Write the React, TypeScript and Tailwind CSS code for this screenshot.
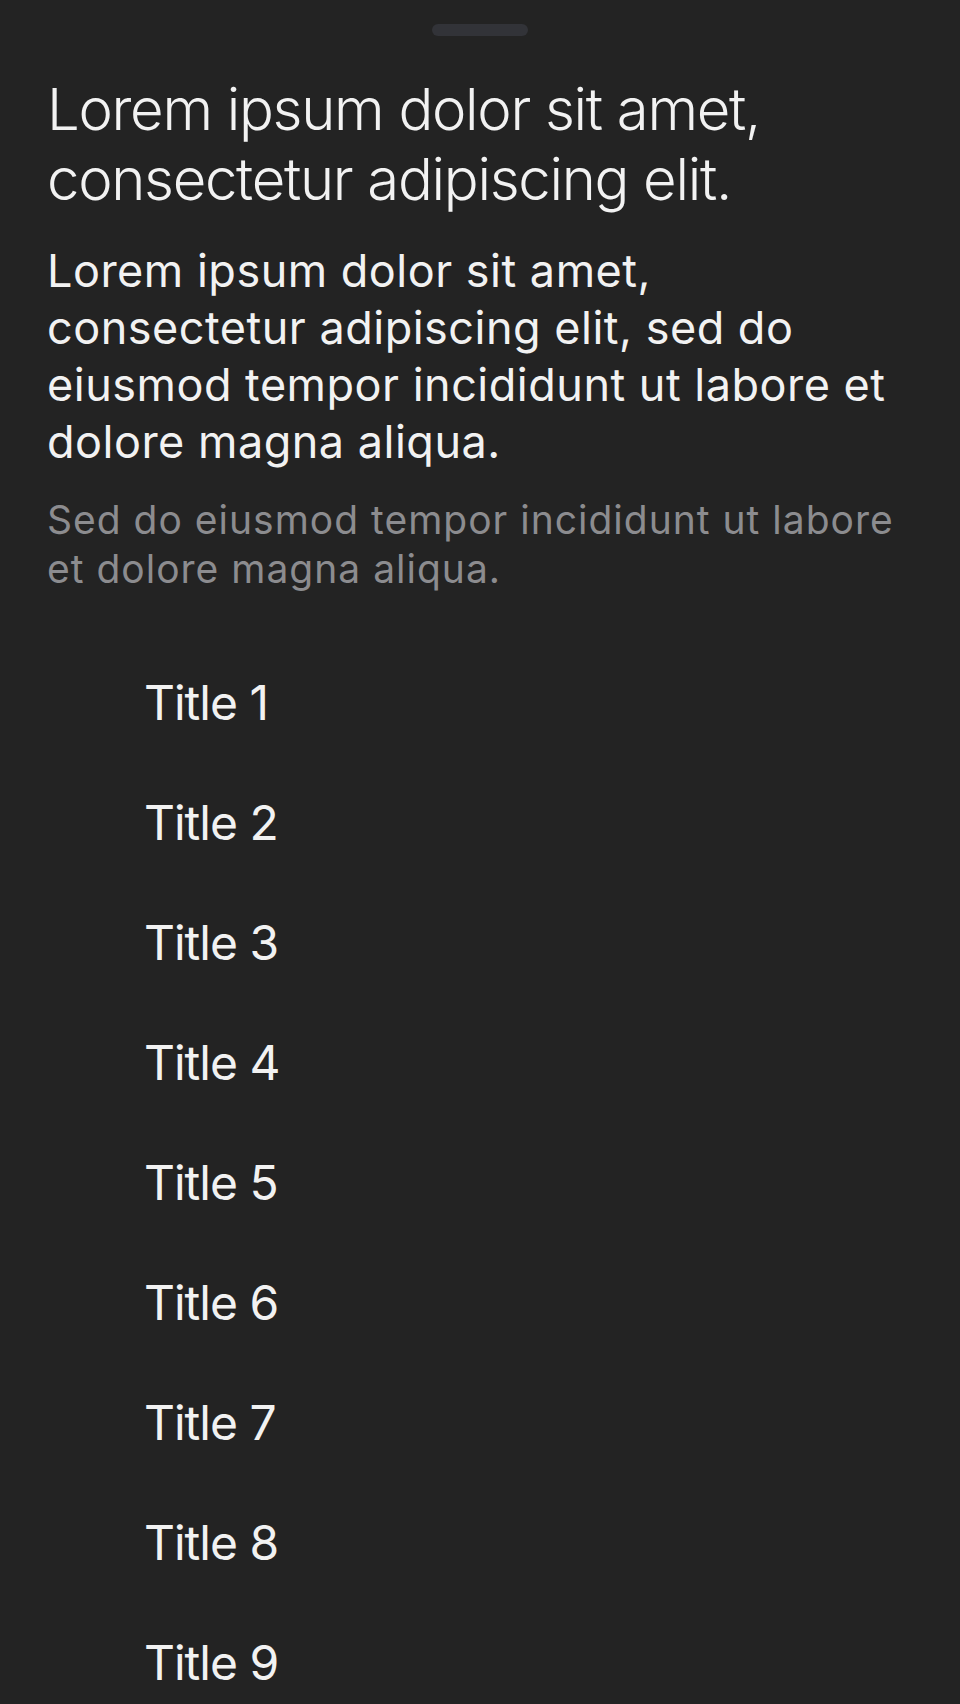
import React from "react";

const titles = ["Title 1", "Title 2", "Title 3", "Title 4", "Title 5", "Title 6", "Title 7", "Title 8", "Title 9"];

function Lines({ lines }: { lines: string[] }) {
  return (
    <>
      {lines.map((l) => (
        <span key={l} className="block whitespace-nowrap">
          {l}
        </span>
      ))}
    </>
  );
}

export default function App() {
  return (
    <div
      className="w-[960px] h-[1704px] overflow-hidden bg-[#232323] text-[#f2f2f2]"
      style={{ fontFamily: "Inter, 'Noto Sans', sans-serif" }}
    >
      <div className="flex justify-center pt-[24px]">
        <div className="w-[96px] h-[12px] rounded-full bg-[#323338]" />
      </div>
      <div className="px-[47px] pt-[38px]">
        <h1 className="text-[58px] leading-[70px] font-light tracking-[-1.3px]">
          <Lines lines={["Lorem ipsum dolor sit amet,", "consectetur adipiscing elit."]} />
        </h1>
        <p className="mt-[28px] text-[45px] leading-[57px] font-normal tracking-[0.5px]">
          <Lines
            lines={[
              "Lorem ipsum dolor sit amet,",
              "consectetur adipiscing elit, sed do",
              "eiusmod tempor incididunt ut labore et",
              "dolore magna aliqua.",
            ]}
          />
        </p>
        <p className="mt-[25px] text-[39px] leading-[49px] text-[#8c8c8f] tracking-[1px]">
          <Lines lines={["Sed do eiusmod tempor incididunt ut labore", "et dolore magna aliqua."]} />
        </p>
      </div>
      <div className="mt-[50px] flex flex-col pl-[144px]">
        {titles.map((t) => (
          <div key={t} className="h-[120px] flex items-center">
            <span className="text-[48px] leading-[60px] tracking-[-1px]">{t}</span>
          </div>
        ))}
      </div>
    </div>
  );
}
